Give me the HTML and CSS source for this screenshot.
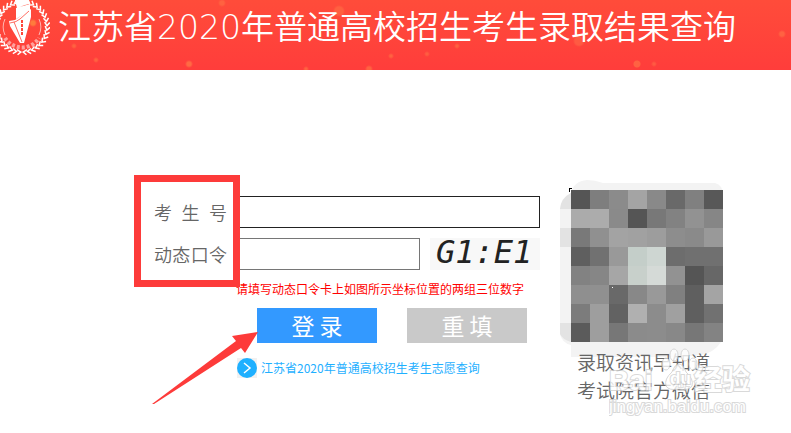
FILE: index.html
```html
<!DOCTYPE html>
<html lang="zh-CN">
  <head>
    <meta charset="UTF-8" />
    <title>江苏省2020年普通高校招生考生录取结果查询</title>
    <link rel="stylesheet" href="styles.css">
  </head>
  <body>
    <header class="banner">
      <svg class="logo" width="50" height="57" viewBox="0 0 50 57" fill="none" stroke="#fff">
        <g id="wreath" stroke-width="1.5"></g>
        <path d="M5 19a19 19 0 0 0 0 16M39 19a19 19 0 0 1 0 16" stroke-width="1" opacity="0.6" />
        <path d="M5 38a20 20 0 0 0 34 0" stroke-width="4" stroke-dasharray="3 2" opacity="0.5" />
        <path d="M15 0h14l1 3-13 5zM16 8l14-4v6L16 19zM9 21l6-1L31 9v8l-7 26h-4L10 26z" fill="#fff" stroke="none" />
        <path d="M10 23q7-1 10-4l9-8M14 22l8 20" stroke="#ff473a" stroke-width="0.8" />
        <path d="M22 20v16" stroke="#ff473a" stroke-width="2" stroke-dasharray="3 1" />
      </svg>
      <h1>江苏省2020年普通高校招生考生录取结果查询</h1>
    </header>

    <main class="content">
      <form class="login">
        <div class="fields">
          <div class="row">
            <label for="ksh">考 生 号</label>
            <input class="active" type="text" id="ksh" />
          </div>
          <div class="row">
            <label for="dtkl">动态口令</label>
            <input type="text" id="dtkl" />
            <svg class="code" width="110" height="32" viewBox="0 0 110 32">
              <rect width="110" height="32" fill="#f8f8f8" />
              <text x="6" y="25">G1:E1</text>
            </svg>
          </div>
          <div class="mark-box"></div>
        </div>
        <p class="hint">请填写动态口令卡上如图所示坐标位置的两组三位数字</p>
        <div class="actions">
          <button class="btn submit" type="submit">登 录</button>
          <button class="btn reset" type="reset">重 填</button>
          <svg class="arrow" width="106" height="74" viewBox="0 0 106 74">
            <path d="M0 73L84 10l-4-5 26-4-13 21-4-5L2 73z" fill="#fd3b3a" />
          </svg>
        </div>
        <a class="more" href="#">
          <svg width="20" height="20" viewBox="0 0 20 20" fill="none">
            <rect width="20" height="20" fill="#f1f1f1" />
            <circle cx="10" cy="10" r="10" fill="#1fb0ff" />
            <path d="M7 5l6 5-6 5" stroke="#fff" stroke-width="1.5" />
          </svg>
          江苏省2020年普通高校招生考生志愿查询
        </a>
      </form>

      <aside class="wechat">
        <svg class="qr" width="163" height="169" viewBox="0 0 163 169">
          <path d="M0 30Q1 19 11 14 14 2 27 1q8 0 16 3h112q8 2 8 12v142q-3 11-17 17-20 4-40 3H11v-12Q2 164 0 155z" fill="#f3f3f3" />
          <path d="M0 49h11v19H0zM0 144h11v19Q2 160 0 155zM0 30Q1 19 11 14v16z" fill="#e3e3e3" />
          <g id="mosaic" transform="translate(11 11)" shape-rendering="crispEdges"></g>
          <path d="M9 9h3v1h-2v3H9z" fill="#000" />
          <path d="M52 108h1v1h-1z" fill="#fff" />
        </svg>
        <p>录取资讯早知道<br />考试院官方微信</p>
        <svg class="watermark" width="150" height="76" viewBox="0 0 150 76">
          <g fill="#fff" stroke="#d0d0d0">
            <ellipse cx="57" cy="17" rx="4" ry="6" />
            <ellipse cx="65" cy="8" rx="4" ry="6" />
            <ellipse cx="76" cy="8" rx="4" ry="6" />
            <ellipse cx="84" cy="17" rx="4" ry="6" />
            <path d="M70 17q-4 0-7 8-8 7-6 14 3 5 13 3 10 2 13-3 2-7-6-14-3-8-7-8z" />
          </g>
          <text class="brand" x="0" y="43">Bai</text>
          <text class="du" x="61" y="37">du</text>
          <text class="brand" x="85" y="43">经验</text>
          <text class="site" x="0" y="65">jingyan.baidu.com</text>
        </svg>
      </aside>
    </main>

    <script>
      const cells = [
        "555 7e7e7e 8b8b8b a4a4a4 898989 696969 808080 585858",
        "ababab acacac 8a8a8a 555 787878 828282 929292 868686",
        "797979 909090 a3a3a3 a1a1a1 9d9d9d 8d8d8d 8a8a8a 999",
        "5f5f5f 717171 999 c4cec9 ced6d2 6d6d6d 707070 707070",
        "828282 868686 a6a6a6 c8d0cb d5dad7 929292 555 676767",
        "8f8f8f 909090 696969 888 999 808080 5f5f5f a4a4a4",
        "7c7c7c 9e9e9e 626262 b0b0b0 8c8c8c a0a0a0 5f5f5f 717171",
        "5b5b5b 9e9e9e 777 8b8b8b 8c8c8c 888 777 838383",
      ];
      document.getElementById("mosaic").innerHTML = cells
        .map((line, y) =>
          line
            .split(" ")
            .map((c, x) => `<rect x="${x * 19}" y="${y * 19}" width="19" height="19" fill="#${c}" />`)
            .join("")
        )
        .join("");

      // leaves run up both sides from the bottom
      let leaves = "";
      for (let a = 5; a < 170; a += 10) {
        leaves += `<path d="M19 50l4 2-3 3" transform="rotate(${a} 22 27)" />`;
        leaves += `<path d="M25 50l-4 2 3 3" transform="rotate(${-a} 22 27)" />`;
      }
      document.getElementById("wreath").innerHTML = leaves;
    </script>
  </body>
</html>
```
FILE: styles.css
```css
body {
  margin: 0;
  background: #fff;
  font-family: "Noto Sans CJK SC", sans-serif;
  font-size: 12px;
}
h1,
p {
  margin: 0;
}
.banner {
  display: flex;
  align-items: flex-start;
  gap: 8px;
  height: 70px;
  color: #fff;
  background:
    radial-gradient(circle at 189px 64px, #ff6a43 2px, transparent 4px),
    radial-gradient(circle at 339px 11px, #ff6040 4px, transparent 6px),
    radial-gradient(circle at 33px 23px, #ff7b3c 2px, transparent 4px),
    radial-gradient(circle at 74px 46px, #ff6240 1px, transparent 3px),
    radial-gradient(circle at 96px 60px, #ff6240 1px, transparent 3px),
    radial-gradient(circle at 222px 3px, #ff6240 2px, transparent 4px),
    radial-gradient(circle at 306px 69px, #ff6240 1px, transparent 3px),
    radial-gradient(circle at 369px 69px, #ff6240 2px, transparent 4px),
    radial-gradient(circle at 391px 56px, #ff6240 1px, transparent 3px),
    radial-gradient(circle at 427px 54px, #ff5d40 1px, transparent 3px),
    radial-gradient(circle at 457px 46px, #ff6240 1px, transparent 3px),
    radial-gradient(circle at 579px 41px, #ff5a42 4px, transparent 6px),
    radial-gradient(circle at 637px 64px, #ff6242 3px, transparent 4px),
    radial-gradient(circle at 654px 64px, #ff5a42 1px, transparent 3px),
    radial-gradient(circle at 782px 34px, #ff6242 2px, transparent 4px),
    linear-gradient(#ff4c3a, #ff3d3b);
}
.banner h1 {
  font-family: "DejaVu Sans", "Noto Sans CJK SC", sans-serif;
  font-size: 33px;
  font-weight: 350;
  line-height: 56px;
  white-space: nowrap;
}
.logo {
  flex: none;
}
.content {
  display: flex;
  gap: 20px;
  padding: 109px 71px 27px 154px;
}
.login {
  flex: 1;
  padding-top: 17px;
}
.fields {
  position: relative;
  display: grid;
  gap: 10px;
}
.row {
  display: flex;
  align-items: center;
  gap: 10px;
}
.row label {
  width: 73px;
  color: #666;
  font-size: 18px;
  font-weight: 350;
  line-height: 32px;
  text-align-last: justify;
}
.row input {
  flex: 1;
  min-width: 0;
  height: 32px;
  box-sizing: border-box;
  border: 1px solid #767676;
}
.row .active {
  border-color: #222;
}
.code {
  flex: none;
  overflow: visible;
}
.code text {
  font: italic 32px "DejaVu Sans Mono", monospace;
  fill: #222;
}
.mark-box {
  position: absolute;
  top: -21px;
  left: -20px;
  width: 106px;
  height: 112px;
  box-sizing: border-box;
  border: 7px solid #fd3b3a;
}
.hint {
  padding: 10px 0 0 82px;
  color: #f00;
  line-height: 18px;
  white-space: nowrap;
}
.actions {
  position: relative;
  display: flex;
  gap: 30px;
  padding: 10px 0 0 103px;
}
.btn {
  width: 120px;
  height: 35px;
  padding: 0;
  border: 0;
  color: #fff;
  font-family: inherit;
  font-size: 23px;
  line-height: 35px;
}
.submit {
  background: #3399ff;
}
.reset {
  background: #c9c9c9;
}
.arrow {
  position: absolute;
  top: 33px;
  left: -2px;
}
.more {
  display: flex;
  align-items: center;
  gap: 4px;
  padding: 15px 0 0 83px;
  color: #1fb0ff;
  line-height: 20px;
  text-decoration: none;
  white-space: nowrap;
}
.wechat {
  position: relative;
  width: 163px;
}
.qr {
  display: block;
  overflow: visible;
}
.wechat p {
  position: relative;
  padding-left: 17px;
  color: #666;
  font-size: 19px;
  font-weight: 350;
  line-height: 28px;
  white-space: nowrap;
}
.watermark {
  position: absolute;
  top: 168px;
  left: 49px;
  opacity: 0.8;
}
.watermark text {
  fill: #fff;
  stroke: #d0d0d0;
  stroke-width: 2px;
  paint-order: stroke;
}
.watermark .brand {
  font: bold 28px "Liberation Sans", "Noto Sans CJK SC", sans-serif;
}
.watermark .du {
  font: bold 17px "Liberation Sans", sans-serif;
}
.watermark .site {
  font: 17px "Liberation Sans", sans-serif;
}
```
